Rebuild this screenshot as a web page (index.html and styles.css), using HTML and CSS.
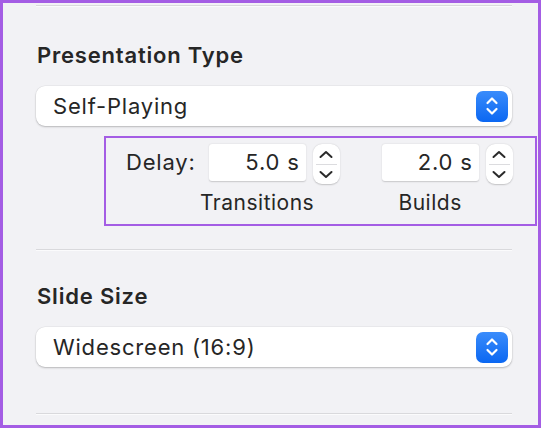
FILE: index.html
```html
<!DOCTYPE html>
<html lang="en">
<head>
    <meta charset="UTF-8">
    <title>Presentation Settings</title>
    <link rel="stylesheet" href="styles.css">
</head>
<body>
    <div class="panel">
        <div class="separator"></div>

        <div class="section-title first">Presentation Type</div>
        <div class="popup">
            <span class="popup-label">Self-Playing</span>
            <span class="popup-button">
                <svg width="14" height="22" viewBox="0 0 14 22"><path d="M2.5 8 L7 3.5 L11.5 8 M2.5 14 L7 18.5 L11.5 14" fill="none" stroke="#fff" stroke-width="2.2" stroke-linecap="round" stroke-linejoin="round"/></svg>
            </span>
        </div>

        <div class="delay-box">
            <div class="delay-row">
                <span class="delay-label">Delay:</span>
                <div class="delay-field">
                    <div class="field-row">
                        <span class="field">5.0 s</span>
                        <span class="stepper">
                            <svg width="16" height="12" viewBox="0 0 16 12"><path d="M2.5 8 L8 3 L13.5 8" fill="none" stroke="#2a2a2a" stroke-width="2" stroke-linecap="round" stroke-linejoin="round"/></svg>
                            <span class="stepper-divider"></span>
                            <svg width="16" height="12" viewBox="0 0 16 12"><path d="M2.5 4 L8 9 L13.5 4" fill="none" stroke="#2a2a2a" stroke-width="2" stroke-linecap="round" stroke-linejoin="round"/></svg>
                        </span>
                    </div>
                    <div class="field-caption">Transitions</div>
                </div>
                <div class="delay-field second">
                    <div class="field-row">
                        <span class="field">2.0 s</span>
                        <span class="stepper">
                            <svg width="16" height="12" viewBox="0 0 16 12"><path d="M2.5 8 L8 3 L13.5 8" fill="none" stroke="#2a2a2a" stroke-width="2" stroke-linecap="round" stroke-linejoin="round"/></svg>
                            <span class="stepper-divider"></span>
                            <svg width="16" height="12" viewBox="0 0 16 12"><path d="M2.5 4 L8 9 L13.5 4" fill="none" stroke="#2a2a2a" stroke-width="2" stroke-linecap="round" stroke-linejoin="round"/></svg>
                        </span>
                    </div>
                    <div class="field-caption">Builds</div>
                </div>
            </div>
        </div>

        <div class="separator middle"></div>

        <div class="section-title">Slide Size</div>
        <div class="popup">
            <span class="popup-label">Widescreen (16:9)</span>
            <span class="popup-button">
                <svg width="14" height="22" viewBox="0 0 14 22"><path d="M2.5 8 L7 3.5 L11.5 8 M2.5 14 L7 18.5 L11.5 14" fill="none" stroke="#fff" stroke-width="2.2" stroke-linecap="round" stroke-linejoin="round"/></svg>
            </span>
        </div>

        <div class="separator bottom"></div>
    </div>
</body>
</html>
```

FILE: styles.css
```css
body {
    margin: 0;
    background: #fff;
    font-family: Inter, "Noto Sans", sans-serif;
    color: #262626;
}

.panel {
    width: 541px;
    height: 428px;
    box-sizing: border-box;
    border: 3px solid #a45de4;
    background: #f2f2f5;
    padding: 2px 26px 0 33px;
}

.separator {
    width: 476px;
    height: 1px;
    background: #d9d9dc;
    border-bottom: 1px solid #fbfbfc;
}

.separator.middle {
    margin-top: 23px;
}

.separator.bottom {
    margin-top: 46px;
}

.section-title {
    font-size: 22px;
    letter-spacing: 0.8px;
    line-height: 26px;
    font-weight: 600;
    margin-top: 32px;
    margin-bottom: 18px;
    padding-left: 1px;
}

.section-title.first {
    margin-top: 35px;
}

.popup {
    width: 476px;
    height: 40px;
    box-sizing: border-box;
    background: #fff;
    border-radius: 9px;
    box-shadow: 0 1px 2px rgba(0, 0, 0, 0.22), 0 0 0 0.5px rgba(0, 0, 0, 0.06);
    display: flex;
    align-items: center;
    justify-content: space-between;
    padding: 0 4px 0 17px;
}

.popup-label {
    font-size: 22px;
    letter-spacing: 0.8px;
}

.popup-button {
    width: 32px;
    height: 31px;
    border-radius: 7px;
    background: linear-gradient(#3a8cfb, #0b67f2);
    display: flex;
    align-items: center;
    justify-content: center;
}

.delay-box {
    margin: 10px -25px 0 68px;
    width: 433px;
    height: 90px;
    box-sizing: border-box;
    border: 2px solid #a45de4;
    padding: 6px 0 0 20px;
}

.delay-row {
    display: flex;
    align-items: flex-start;
}

.delay-label {
    font-size: 22px;
    letter-spacing: 0.8px;
    line-height: 37px;
    margin-right: 13px;
}

.delay-field {
    display: flex;
    flex-direction: column;
}

.delay-field.second {
    margin-left: 42px;
}

.field-row {
    display: flex;
    align-items: flex-start;
    gap: 7px;
}

.field {
    width: 97px;
    height: 37px;
    box-sizing: border-box;
    background: #fff;
    border-radius: 3px;
    box-shadow: 0 0.5px 1.5px rgba(0, 0, 0, 0.18);
    font-size: 22px;
    letter-spacing: 0.8px;
    line-height: 37px;
    text-align: right;
    padding-right: 6px;
}

.stepper {
    width: 27px;
    height: 40px;
    box-sizing: border-box;
    background: #fff;
    border-radius: 9px;
    box-shadow: 0 0.5px 1.5px rgba(0, 0, 0, 0.2);
    display: flex;
    flex-direction: column;
    align-items: center;
    justify-content: center;
    gap: 3px;
}

.stepper-divider {
    width: 21px;
    height: 1px;
    background: #dcdcdf;
}

/* centred under the text field, not the whole field + stepper */
.field-caption {
    width: 137px;
    margin-left: -20px;
    text-align: center;
    font-size: 21px;
    letter-spacing: 0.5px;
    line-height: 26px;
    margin-top: 6px;
}
```
